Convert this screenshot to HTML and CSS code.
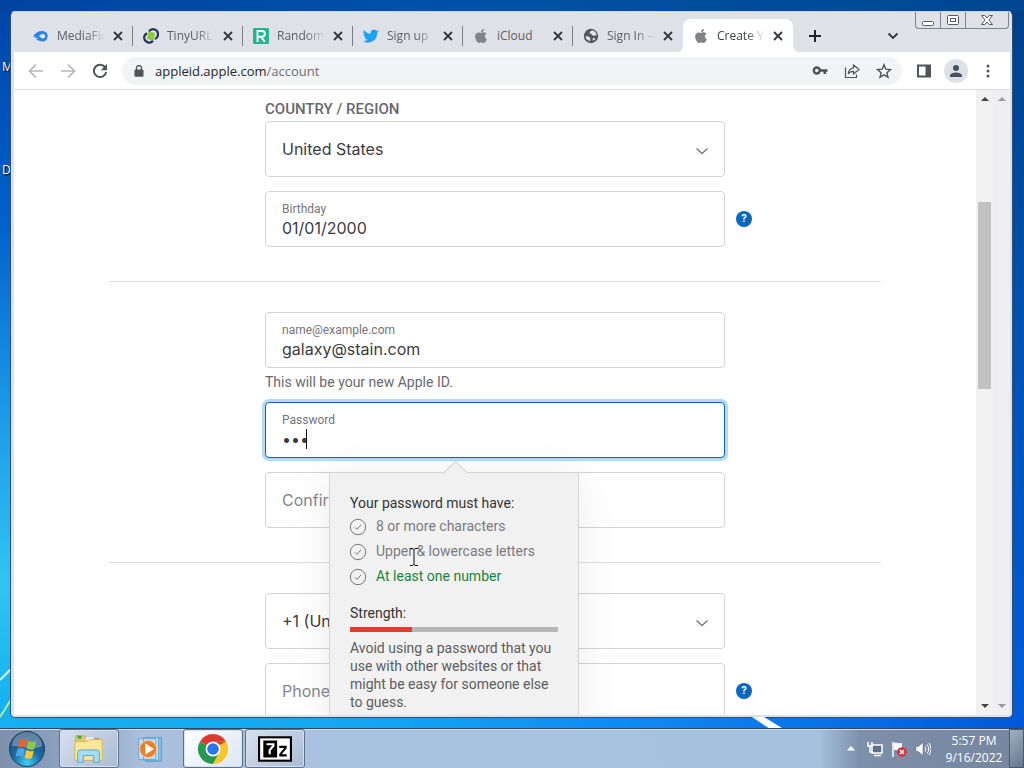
FILE: index.html
```
<!DOCTYPE html>
<html lang="en">
<head>
<meta charset="utf-8">
<meta name="viewport" content="width=device-width, initial-scale=1">
<title>Create Your Apple ID</title>
<link rel="stylesheet" href="styles.css">
</head>
<body>
<svg class="defs" aria-hidden="true">
  <symbol id="x" viewBox="0 0 10 10"><path d="M1 1l8 8M9 1L1 9" stroke="currentColor" stroke-width="1.8" fill="none"/></symbol>
  <symbol id="apple" viewBox="0 0 384 512"><path fill="currentColor" d="M318.700 268.700c-.2-36.700 16.400-64.400 50-84.800-18.800-26.900-47.200-41.700-84.700-44.600-35.500-2.800-74.300 20.700-88.500 20.700-15 0-49.400-19.700-76.400-19.700C63.300 141.200 4 184.800 4 273.500q0 39.300 14.400 81.200c12.800 36.700 59 126.700 107.200 125.200 25.200-.6 43-17.900 75.800-17.900 31.800 0 48.300 17.900 76.400 17.900 48.600-.7 90.400-82.500 102.600-119.300-65.200-30.700-61.700-90-61.700-91.900zm-56.600-164.200c27.300-32.400 24.800-61.900 24-72.500-24.100 1.400-52 16.400-67.900 34.900-17.500 19.800-27.800 44.300-25.600 71.900 26.100 2 49.900-11.400 69.500-34.300z"/></symbol>
  <symbol id="chev" viewBox="0 0 14 14"><path d="M1.500 4.500L7 9.500l5.500-5" stroke="currentColor" fill="none" stroke-width="1.3"/></symbol>
  <symbol id="check" viewBox="0 0 18 18"><circle cx="9" cy="9" r="7.700" fill="none" stroke="currentColor"/><path d="M5.800 9.300l2.100 2.100 4.200-4.600" fill="none" stroke="currentColor"/></symbol>
</svg>
<div class="screen">
  <main class="desktop">
    <svg class="rays" viewBox="0 0 12 80" aria-hidden="true"><path d="M0 42L12 30" stroke="#d8f4ff" stroke-width="2"/><path d="M0 79L12 60" stroke="#b6ec8c" stroke-width="2"/></svg>
    <span class="desk-label desk-label-a">M</span>
    <span class="desk-label desk-label-b">D</span>
    <div class="window">
      <header class="strip">
        <div class="tabs">
          <div class="tab"><svg class="fav" viewBox="0 0 16 16"><path d="M0 8.500C2 5 5 3 9.500 3a5.200 5.200 0 0 1 0 10.400C6 13.400 5 12 3 11.600l2.500-1L1 9.800l3-1z" fill="#2583e2"/><path d="M6 8.800C7.200 7 8 6 9.800 6c3 0 3 4.500 0 4.500C8.400 10.500 8 9 6 8.800z" fill="#e4eefa"/></svg><button class="title">MediaFire</button><button class="close" aria-label="Close MediaFire"><svg><use href="#x"/></svg></button></div>
          <div class="tab"><svg class="fav" viewBox="0 0 16 16"><rect x="4.500" y="4" width="7" height="8" rx="1.500" fill="#8fc93a" transform="rotate(12 8 8)"/><path d="M6 3.300a5 5 0 0 1 9 3.200 5 5 0 0 1-3 4.500" fill="none" stroke="#24355f" stroke-width="2.200"/><path d="M4 5.200a5 5 0 0 0-2.800 5 5 5 0 0 0 8.800 2.500" fill="none" stroke="#24355f" stroke-width="2.200"/></svg><button class="title">TinyURL</button><button class="close" aria-label="Close TinyURL"><svg><use href="#x"/></svg></button></div>
          <div class="tab"><svg class="fav" viewBox="0 0 16 16"><rect width="16" height="16" rx="1" fill="#22b78e"/><path d="M4.500 14V3H9a2.800 2.800 0 0 1 0 5.700H4.500M8 8.700l3.800 5.200" stroke="#fff" stroke-width="1.900" fill="none"/></svg><button class="title">Random</button><button class="close" aria-label="Close Random"><svg><use href="#x"/></svg></button></div>
          <div class="tab"><svg class="fav" viewBox="0 0 24 24"><path fill="#1da1f2" d="M23.600 4.800c-.9.400-1.800.6-2.800.8 1-.6 1.800-1.600 2.200-2.700-.9.600-2 1-3.100 1.200a4.900 4.900 0 0 0-8.400 4.500C7.400 8.400 3.800 6.400 1.400 3.400a4.900 4.900 0 0 0 1.500 6.600c-.8 0-1.600-.2-2.200-.6v.1c0 2.400 1.700 4.400 3.900 4.800-.7.200-1.500.2-2.200.1.600 2 2.400 3.400 4.600 3.400A9.900 9.900 0 0 1 0 19.900 14 14 0 0 0 21.200 7.300c1-.7 1.800-1.500 2.400-2.500z"/></svg><button class="title">Sign up</button><button class="close" aria-label="Close Sign up"><svg><use href="#x"/></svg></button></div>
          <div class="tab"><svg class="fav grey"><use href="#apple"/></svg><button class="title clear">iCloud</button><button class="close" aria-label="Close iCloud"><svg><use href="#x"/></svg></button></div>
          <div class="tab"><svg class="fav" viewBox="0 0 16 16"><circle cx="8" cy="8" r="7.200" fill="#54585c"/><path d="M2.500 8.500c2-.6 4 .2 4.700 1.600.3.900-.3 1.600.3 2.800C4.700 13 3 11 2.500 8.500zM9 2.300C8.300 3.600 6.300 3.600 6.500 5c.2 1 1.500.4 2 1.300.5 1.200 1.800 1.900 3 1.200.5-.4 1.500-.1 2 .4.100-3-1.900-5.300-4.500-5.600zM9.500 10.500c1-.8 2.200-.4 3 .3-.7 1-1.600 1.700-2.600 2z" fill="#e4e6e9"/></svg><button class="title">Sign In —</button><button class="close" aria-label="Close Sign In"><svg><use href="#x"/></svg></button></div>
          <div class="tab active"><svg class="fav grey"><use href="#apple"/></svg><button class="title">Create Your</button><button class="close" aria-label="Close Create Your"><svg><use href="#x"/></svg></button></div>
          <button class="newtab" aria-label="New tab"><svg viewBox="0 0 12 12"><path d="M6 0v12M0 6h12" stroke="currentColor" stroke-width="2"/></svg></button>
        </div>
        <button class="tabsearch" aria-label="Search tabs"><svg viewBox="0 0 12 12"><path d="M1.500 3.500L6 8l4.500-4.500" stroke="currentColor" stroke-width="1.800" fill="none"/></svg></button>
        <div class="controls">
          <button aria-label="Minimize"><svg viewBox="0 0 14 12"><rect x="1.500" y="7.500" width="11" height="4" rx="1" fill="#fff" stroke="#555b64"/></svg></button>
          <button aria-label="Maximize"><svg viewBox="0 0 14 12"><rect x="1.500" y="1.500" width="11" height="9" rx="1" fill="#fff" stroke="#555b64"/><rect x="4.500" y="4.500" width="5" height="3" fill="none" stroke="#555b64"/></svg></button>
          <button class="wide" aria-label="Close window"><svg viewBox="0 0 14 12"><path d="M1.500 1.500h3.300L7 4l2.200-2.500h3.300L8.900 6l3.600 4.500H9.200L7 8l-2.200 2.500H1.500L5.100 6z" fill="#fff" stroke="#555b64"/></svg></button>
        </div>
      </header>
      <div class="frame">
        <nav class="toolbar">
          <button class="faint" aria-label="Back"><svg viewBox="0 0 16 16"><path d="M15 8H2M8 1.500L1.500 8 8 14.500" stroke="currentColor" stroke-width="1.700" fill="none"/></svg></button>
          <button class="faint" aria-label="Forward"><svg viewBox="0 0 16 16"><path d="M1 8h13M8 1.500L14.500 8 8 14.500" stroke="currentColor" stroke-width="1.700" fill="none"/></svg></button>
          <button aria-label="Reload"><svg viewBox="0 0 16 16"><path d="M13.300 4.500A6.200 6.200 0 1 0 14.200 9" stroke="currentColor" stroke-width="2" fill="none"/><path d="M15 1v6.200H8.800z" fill="currentColor"/></svg></button>
          <div class="omnibox">
            <svg class="lock" viewBox="0 0 10 12"><rect x="0.500" y="4.500" width="9" height="7.200" rx="1" fill="#505458"/><path d="M2.500 5V3a2.500 2.500 0 0 1 5 0v2" fill="none" stroke="#505458" stroke-width="1.300"/></svg>
            <a class="url" href="#">appleid.apple.com<span>/account</span></a>
            <button aria-label="Saved passwords"><svg viewBox="0 0 16 16"><circle cx="4.800" cy="7.500" r="3" fill="none" stroke="currentColor" stroke-width="2.400"/><path d="M8 7.500h7.500M12.800 7v4" stroke="currentColor" stroke-width="2.600" fill="none"/></svg></button>
            <button aria-label="Share"><svg viewBox="0 0 16 16"><path d="M1.500 4.500v10h11v-3" stroke="currentColor" stroke-width="1.200" fill="none"/><path d="M9.500 2l5.500 4.500-5.500 4.500V8.300c-2.500 0-4 .8-5.300 2.700.3-3 2-5.700 5.300-6.200z" stroke="currentColor" stroke-width="1.200" fill="none"/></svg></button>
            <button aria-label="Bookmark"><svg viewBox="0 0 16 16"><path d="M8 1.800l1.800 4.400 4.700.4-3.600 3.100 1.100 4.600L8 11.800l-4 2.500 1.100-4.600-3.600-3.100 4.700-.4z" stroke="currentColor" stroke-width="1.400" fill="none"/></svg></button>
          </div>
          <button aria-label="Side panel"><svg viewBox="0 0 16 16"><path d="M1 1.500h14v13H1zM3 3.500v9h6.500v-9z" fill="currentColor" fill-rule="evenodd"/></svg></button>
          <button class="avatar" aria-label="Profile"><svg viewBox="0 0 16 16"><circle cx="8" cy="5" r="3"/><path d="M2 14v-1.500c0-2 4-3 6-3s6 1 6 3V14z" fill="currentColor"/></svg></button>
          <button aria-label="Menu"><svg viewBox="0 0 16 16"><circle cx="8" cy="3" r="1.500"/><circle cx="8" cy="8" r="1.500"/><circle cx="8" cy="13" r="1.500"/></svg></button>
        </nav>
        <div class="view">
          <form class="page">
            <section class="section">
              <div class="column">
                <label class="heading" for="country">COUNTRY / REGION</label>
                <div class="field">
                  <select id="country"><option>United States</option></select>
                  <svg class="chev"><use href="#chev"/></svg>
                </div>
                <div class="field labelled">
                  <label for="bday">Birthday</label>
                  <input id="bday" type="text" value="01/01/2000">
                  <button type="button" class="help" aria-label="Birthday help">?</button>
                </div>
              </div>
            </section>
            <section class="section">
              <div class="column">
                <div class="field labelled">
                  <label for="mail">name@example.com</label>
                  <input id="mail" type="text" value="galaxy@stain.com">
                </div>
                <p class="note">This will be your new Apple ID.</p>
                <div class="field labelled focused">
                  <label for="pw">Password</label>
                  <div class="secret"><input id="pw" type="password" value="abc"><i class="caret"></i></div>
                  <aside class="popover">
                    <h2>Your password must have:</h2>
                    <ul>
                      <li><svg><use href="#check"/></svg>8 or more characters</li>
                      <li><svg><use href="#check"/></svg>Upper &amp; lowercase letters</li>
                      <li class="ok"><svg><use href="#check"/></svg>At least one number</li>
                    </ul>
                    <h2 class="strength">Strength:</h2>
                    <div class="meter"><div class="meter-fill" style="width:30%"></div></div>
                    <p>Avoid using a password that you use with other websites or that might be easy for someone else to guess.</p>
                    <svg class="ibeam" viewBox="0 0 8 18"><path d="M0 .5h3l1 1 1-1h3M0 17.500h3l1-1 1 1h3M4 1v16" stroke="#111" fill="none"/></svg>
                  </aside>
                </div>
                <div class="field"><input type="password" aria-label="Confirm password" placeholder="Confirm password"></div>
              </div>
            </section>
            <section class="section">
              <div class="column">
                <div class="field">
                  <select aria-label="Country code"><option>+1 (United States)</option></select>
                  <svg class="chev"><use href="#chev"/></svg>
                </div>
                <div class="field">
                  <input type="text" aria-label="Phone number" placeholder="Phone number">
                  <button type="button" class="help" aria-label="Phone help">?</button>
                </div>
              </div>
            </section>
          </form>
          <div class="scroll inner"><i class="up"></i><i class="thumb"></i><i class="down"></i></div>
          <div class="scroll outer"><i class="up"></i><i class="down"></i></div>
        </div>
      </div>
    </div>
  </main>
  <footer class="taskbar">
    <button class="start" aria-label="Start"><svg viewBox="0 0 36 36"><defs><radialGradient id="orb" cx=".5" cy=".9" r=".9"><stop offset="0" stop-color="#3fd0f4"/><stop offset=".45" stop-color="#1c6ba4"/><stop offset="1" stop-color="#254a70"/></radialGradient></defs><circle cx="18" cy="18" r="17.500" fill="url(#orb)" stroke="#203c58"/><path d="M3 15a15 14 0 0 1 30 0c-8 5-22-1-30 0z" fill="#b9d0e4" opacity=".4"/><path d="M11 9c3-1.600 5-1 7 .3L16.300 17c-2.500-1.500-5-1.700-7.500-.3z" fill="#f0602a"/><path d="M19.300 9.800c2.500 1.500 5 1.700 8 .2l-2 8c-2.600 1.300-5 1-7.600-.4z" fill="#8fc73e"/><path d="M8.400 18c2.600-1.400 5-1.100 7.500.4l-1.800 7.500c-2.500-1.600-5-1.600-7.500-.2z" fill="#4aa7ea"/><path d="M17.300 19c2.500 1.400 5 1.700 7.600.4l-2 7.600c-2.500 1.300-5 1-7.400-.5z" fill="#fcc92f"/></svg></button>
    <div class="apps">
      <button class="open" aria-label="File Explorer"><svg viewBox="0 0 36 32"><path d="M4 2h9l2 3h14v23H4z" fill="#e8c866" stroke="#c5a449"/><path d="M6 2h4v3H6z" fill="#35a853"/><path d="M15 4h8v3h-8z" fill="#f3f5f7"/><path d="M24 5h4v3h-4z" fill="#4385cf"/><path d="M3 8h13l2-2h14v22H3z" fill="#f7e799" stroke="#d3b75d"/><path d="M6 30V20q0-3 3-3h17q3 0 3 3v10h-6v-7H12v7z" fill="#a2dcf5" stroke="#51a5d3"/></svg></button>
      <button aria-label="Media Player"><svg viewBox="0 0 36 32"><path d="M13 4h16v25H13z" fill="#8dc4e6" stroke="#4b98c8"/><path d="M10 4h16v24H10zM5 5h18v22H5z" fill="#c0e1f3" stroke="#5ea7d0"/><circle cx="15" cy="16" r="9" fill="#ee7d24" stroke="#f9c795"/><path d="M12 10l9 6-9 6z" fill="#fff"/></svg></button>
      <button class="open current" aria-label="Chrome"><svg viewBox="0 0 32 32"><path d="M16 16L3 8.500A15 15 0 0 1 29 8.500L16 9z" fill="#dc3a2e"/><path d="M3 8.500A15 15 0 0 0 16 31l6.500-11.500L16 16z" fill="#29994f"/><path d="M29 8.500A15 15 0 0 1 16 31l6.500-11.500V9L16 8.500z" fill="#fbc625"/><path d="M29 8.500H16V9l6.500 3z" fill="#dc3a2e"/><circle cx="16" cy="16" r="7.500" fill="#fff"/><circle cx="16" cy="16" r="5.800" fill="#2a76ea"/></svg></button>
      <button class="open" aria-label="7-Zip"><svg viewBox="0 0 32 26"><path d="M0 1h32v24H0z"/><path d="M2 3h28v20H2z" fill="#fff"/><path d="M5 5h13v16H5z"/><path d="M8 8.500h6.500v1.500L11 14v4" stroke="#fff" stroke-width="2" fill="none"/><path d="M20 11h6v1l-5 6v1h6" stroke="#000" stroke-width="2" fill="none"/></svg></button>
    </div>
    <div class="tray">
      <button aria-label="Show hidden icons"><svg viewBox="0 0 16 16"><path d="M8 5l4 4.500H4z" fill="#fff"/></svg></button>
      <button aria-label="Network"><svg viewBox="0 0 16 16"><path d="M5 4h10v8H5z" fill="#5d7189" stroke="#fff" stroke-width="1.500"/><path d="M7 14.500h7M1 1v4h4V1M3 5v6h3" stroke="#fff" stroke-width="1.500" fill="none"/></svg></button>
      <button aria-label="Action Center"><svg viewBox="0 0 16 16"><path d="M2 1v15" stroke="#fff" stroke-width="1.500"/><path d="M3 2c3-1 4 1 8 0v7c-3 1-5-1-8 0z" fill="#fff"/><circle cx="11" cy="11" r="4.800" fill="#d9303a"/><path d="M9 9l4 4M13 9l-4 4" stroke="#fff" stroke-width="1.500"/></svg></button>
      <button aria-label="Volume"><svg viewBox="0 0 16 16"><path d="M1 5.500h2.500L8 1.500v13L3.500 10.500H1z" fill="#fff" stroke="#56657a" stroke-width=".5"/><path d="M10 5.500q2 2.500 0 5M12 3.500q3.500 4.500 0 9M14 2q4 6 0 12" stroke="#fff" fill="none"/></svg></button>
      <time class="clock">5:57 PM<br>9/16/2022</time>
    </div>
    <button class="peek" aria-label="Show desktop"></button>
  </footer>
</div>
</body>
</html>
```

FILE: styles.css
```
* { box-sizing: border-box; }
body { margin: 0; font-family: Roboto, "Liberation Sans", sans-serif; color: #333; }
button { font: inherit; color: inherit; background: none; border: 0; padding: 0; margin: 0; }
svg { display: block; }
.defs { position: absolute; width: 0; height: 0; }

.screen { height: 100vh; display: flex; flex-direction: column; overflow: hidden; }
.desktop {
  flex: 1; min-height: 0; position: relative; display: flex; padding: 11px 11px 10px 10px;
  background:
    linear-gradient(90deg, #0044a0, #0052a8 45%, #004690) top / 100% 11px no-repeat,
    linear-gradient(90deg, #14b0f0, #12a8f4 35%, #0d86f4 65%, #0058d8) bottom / 100% 14px no-repeat,
    linear-gradient(#0044a8, #0060cc 30%, #1a96e8 55%, #30c4f4 80%, #10aef0) left / 50% 100% no-repeat,
    linear-gradient(#004088, #0052b0 45%, #005cd8) right / 50% 100% no-repeat;
}
.desktop::after {
  content: ""; position: absolute; bottom: 0; left: 752px; width: 30px; height: 11px;
  background: #fff; clip-path: polygon(0 0, 40% 0, 100% 100%, 55% 100%);
}
.rays { position: absolute; left: 0; bottom: 10px; width: 12px; height: 80px; }
.desk-label { position: absolute; left: 2px; font: 12px "Open Sans", sans-serif; color: #fff; text-shadow: 1px 1px 2px #000; }
.desk-label-a { top: 58px; }
.desk-label-b { top: 161px; }

.window {
  position: relative; flex: 1; min-width: 0; display: flex; flex-direction: column;
  background: #dee1e6; border: 1px solid #2c4f7c; border-top-color: #c5d3e4; border-radius: 5px; overflow: hidden;
  font-family: "Open Sans", sans-serif;
}
.strip { display: flex; height: 40px; align-items: flex-end; padding-left: 12px; flex: none; }
.tabs { display: flex; flex: 1; min-width: 0; }
.tab { position: relative; display: flex; align-items: center; width: 110px; height: 33px; padding: 0 10px; font-size: 12px; color: #5c6066; }
.tab:not(.active)::after { content: ""; position: absolute; right: 0; top: 7px; height: 20px; width: 1px; background: #7c8086; }
.tab:nth-child(6)::after { display: none; }
.tab.active { background: #fff; border-radius: 8px 8px 0 0; color: #3c4043; }
.tab.active::before, .tab.active::after {
  content: ""; position: absolute; bottom: 0; width: 6px; height: 6px;
}
.tab.active::before { left: -6px; background: radial-gradient(circle at 0 0, transparent 6px, #fff 6px); }
.tab.active::after { right: -6px; background: radial-gradient(circle at 100% 0, transparent 6px, #fff 6px); }
.fav { width: 16px; height: 16px; flex: none; }
.fav.grey { color: #818487; }
.title { flex: 1; min-width: 0; margin: 0 8px; overflow: hidden; white-space: nowrap; text-align: left; mask-image: linear-gradient(90deg, #000 60%, transparent); }
.title.clear { mask-image: none; }
.close { width: 10px; height: 10px; flex: none; color: #33373b; }
.close svg { width: 10px; height: 10px; }
.newtab { width: 44px; height: 33px; display: grid; place-items: center; color: #202327; }
.newtab svg { width: 12px; height: 12px; }
.tabsearch { width: 36px; height: 33px; display: grid; place-items: center; color: #33373b; }
.tabsearch svg { width: 12px; height: 12px; }
.controls { align-self: flex-start; display: flex; height: 17px; margin: 0 3px 0 4px; border: 1px solid #7d838b; border-top: 0; border-radius: 0 0 4px 4px; }
.controls button { width: 25px; display: grid; place-items: center; border-right: 1px solid #7d838b; }
.controls .wide { width: 42px; border: 0; }
.controls svg { width: 14px; height: 12px; }

.frame { flex: 1; min-height: 0; display: flex; flex-direction: column; margin: 0 2px 2px 3px; background: #fff; }
.toolbar { display: flex; align-items: center; gap: 8px; height: 38px; flex: none; padding: 0 10px; border-bottom: 1px solid #dcdee1; color: #505458; }
.toolbar button { width: 24px; height: 24px; display: grid; place-items: center; flex: none; }
.toolbar svg { width: 16px; height: 16px; }
.toolbar circle { fill: currentColor; }
.toolbar .omnibox circle { fill: none; }
.toolbar .faint { color: #b4b6b9; }
.omnibox { flex: 1; min-width: 0; display: flex; align-items: center; gap: 8px; height: 28px; padding: 0 6px 0 12px; border-radius: 14px; background: #f1f3f4; margin: 0 2px; }
.toolbar .lock { width: 10px; height: 12px; flex: none; }
.url { flex: 1; margin-left: 3px; font-size: 13px; color: #26292c; text-decoration: none; white-space: nowrap; }
.url span { color: #6a6e73; }
.toolbar .avatar { border-radius: 50%; background: #dde1ea; color: #46505e; }

.view { flex: 1; min-height: 0; display: flex; overflow: hidden; font-family: Inter, sans-serif; }
.page { flex: 1; min-width: 0; overflow: hidden; }
.section { width: 90%; max-width: 772px; margin: 0 auto; padding: 30px 0 34px; border-bottom: 1px solid #dedee0; }
.section:first-child { padding-top: 10px; }
.column { max-width: 460px; margin: 0 auto; display: flex; flex-direction: column; gap: 14px; }
.heading { font: 500 15px/20px Roboto, sans-serif; color: #68686c; margin: -1px 0 -12px; }
.field { position: relative; height: 56px; border: 1px solid #d3d3d6; border-radius: 4px; background: #fff; display: flex; flex-direction: column; justify-content: center; }
.field input, .field select { appearance: none; width: 100%; border: 0; outline: 0; margin: 0; padding: 0 16px; background: none; color: #3c3c40; font: 16px/22px Inter, sans-serif; height: 22px; }
.field input::placeholder { color: #86868b; }
.field.labelled { justify-content: flex-start; padding-top: 9px; }
.labelled label { padding: 0 16px; font: 12px/16px Roboto, sans-serif; color: #75757a; }
.focused { border-color: #0a66b8; box-shadow: 0 0 0 3px #b8d9f5; }
.secret { position: relative; }
.caret { position: absolute; left: 40px; top: 1px; width: 1px; height: 20px; background: #111; }
.chev { position: absolute; right: 15px; top: 22px; width: 14px; height: 14px; color: #77777b; }
.help { position: absolute; right: -28px; top: 19px; width: 16px; height: 16px; border-radius: 50%; background: #0b66bd; color: #fff; font: bold 11px/16px Roboto, sans-serif; }
.note { margin: -10px 0 -4px; font: 14px/20px Roboto, sans-serif; color: #6a6a6e; }

.popover { position: absolute; z-index: 2; left: 63px; top: 69px; width: 250px; min-height: 270px; padding: 21px 20px; background: #f1f1f1; border: 1px solid #d6d6d6; box-shadow: 0 4px 40px rgba(0,0,0,.08); font: 14px/18px Roboto, sans-serif; color: #5c5c60; }
.popover::before { content: ""; position: absolute; left: 117px; top: -9px; width: 16px; height: 16px; background: #f1f1f1; border: solid #d6d6d6; border-width: 1px 0 0 1px; transform: rotate(45deg); }
.popover h2 { margin: 0; font: 14px/18px Roboto, sans-serif; color: #333; }
.popover ul { list-style: none; margin: 1px 0 16px; padding: 0; }
.popover li { display: flex; align-items: center; gap: 9px; height: 25px; color: #7a7a7e; }
.popover li svg { width: 18px; height: 18px; margin: 2px 0 0 -1px; flex: none; }
.popover .ok { color: #16853a; }
.popover .ok svg { color: #75757a; }
.meter { height: 5px; margin: 5px 0 7px; background: #b7b7b7; }
.meter-fill { height: 100%; background: #e13c32; }
.popover p { margin: 0; }
.ibeam { position: absolute; left: 80px; top: 75px; width: 8px; height: 18px; }

.scroll { width: 17px; flex: none; background: #f1f1f1; display: flex; flex-direction: column; align-items: center; padding: 7px 0; color: #444; }
.up, .down { width: 0; height: 0; border: 4px solid transparent; }
.up { border-top: 0; border-bottom-color: currentColor; }
.down { border-bottom: 0; border-top-color: currentColor; margin-top: auto; }
.thumb { width: 13px; height: 187px; margin-top: 101px; background: #c1c1c1; }
.outer { color: #999; background: #efeff1; }

.taskbar { flex: none; height: 40px; display: flex; align-items: stretch; border-top: 1px solid #31465f; box-shadow: inset 0 1px #cfdeee; background: linear-gradient(90deg, #7d90ac, #8fa6c4 8%, #a9bfdb 14%, #a9c2df 32%, #a5c1de 80%, #7d90aa 84%, #75869e); font-family: "Open Sans", sans-serif; }
.start { width: 36px; margin: 0 14px 0 9px; }
.start svg { width: 36px; height: 36px; }
.apps { display: flex; gap: 2px; flex: 1; }
.apps button { width: 60px; display: grid; place-items: center; border: 1px solid transparent; border-radius: 3px; }
.apps .open { border-color: #5d6f89; background: linear-gradient(135deg, #d7e1ef, #a9bbd3); box-shadow: inset 0 0 0 1px #d5e2f0; }
.apps .current { background: linear-gradient(135deg, #fff, #dbe6f3); }
.apps svg { width: 34px; height: 32px; }
.tray { display: flex; align-items: center; gap: 8px; }
.tray svg { width: 16px; height: 16px; }
.clock { width: 70px; text-align: center; font-size: 12px; line-height: 17px; color: #fff; }
.peek { width: 15px; border: 1px solid #4a5a70; background: linear-gradient(135deg, #a2b0c2, #65768d); }
```
